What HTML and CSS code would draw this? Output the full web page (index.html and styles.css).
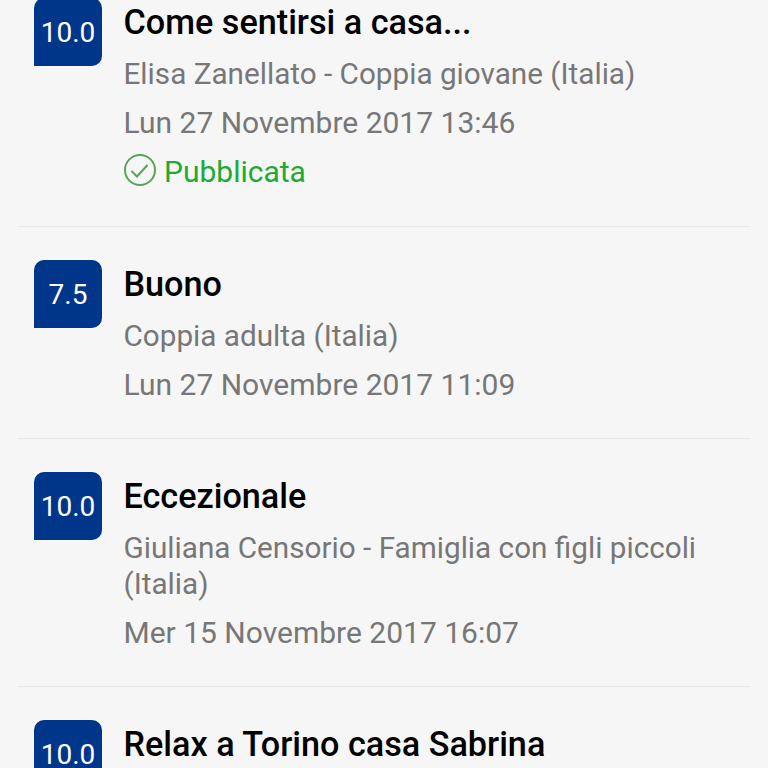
FILE: index.html
```html
<!DOCTYPE html>
<html lang="it">
	<head>
		<title>Recensioni</title>
		<meta charset="utf-8">
		<link rel="stylesheet" href="styles.css">
	</head>
	<body>
		<div class="list">

			<div class="review">
				<div class="score">10.0</div>
				<div class="body">
					<h3 class="title">Come sentirsi a casa...</h3>
					<p class="meta">Elisa Zanellato - Coppia giovane (Italia)</p>
					<p class="meta date">Lun 27 Novembre 2017 13:46</p>
					<p class="status">
						<svg class="status-icon" viewBox="0 0 32 32">
							<circle cx="16" cy="16" r="15" />
							<path d="M7.5 17l5.5 5.5l10.5-11.5" />
						</svg>
						Pubblicata
					</p>
				</div>
			</div>

			<div class="review">
				<div class="score">7.5</div>
				<div class="body">
					<h3 class="title">Buono</h3>
					<p class="meta">Coppia adulta (Italia)</p>
					<p class="meta date">Lun 27 Novembre 2017 11:09</p>
				</div>
			</div>

			<div class="review">
				<div class="score">10.0</div>
				<div class="body">
					<h3 class="title">Eccezionale</h3>
					<p class="meta">Giuliana Censorio - Famiglia con figli piccoli (Italia)</p>
					<p class="meta date">Mer 15 Novembre 2017 16:07</p>
				</div>
			</div>

			<div class="review">
				<div class="score">10.0</div>
				<div class="body">
					<h3 class="title">Relax a Torino casa Sabrina</h3>
				</div>
			</div>

		</div>
	</body>
</html>
```

FILE: styles.css
```css
/*
 * RESET
 */
* { margin: 0; padding: 0; box-sizing: border-box; }
html, body { height: 100%; overflow: hidden; }

/*
 * LAYOUT
 */
body { background: #f6f6f6; font-family: Roboto, sans-serif; }

.list { margin-top: -35px; padding: 0 18px; }

.review {
	display: flex;
	gap: 21.5px;
	padding: 33px 16px 35px;
	border-bottom: 1px solid #e9e9e9;
}
.review:last-child { border-bottom: none; }

.score {
	flex: none;
	display: flex; align-items: center; justify-content: center;
	width: 68px; height: 68px;
	padding-top: 1px;
	background: #00368a;
	border-radius: 10px 10px 10px 0;
	color: #fff;
	font-size: 28px;
}

.body { flex: 1; min-width: 0; }

.title {
	color: #000;
	font-size: 34.2px; font-weight: 500;
	line-height: 48px;
}

.meta {
	margin-top: 10px;
	color: #777;
	font-size: 29.7px;
	line-height: 36px;
}
.date { margin-top: 13px; font-size: 30px; }

.status {
	display: flex; align-items: center; gap: 8px;
	margin-top: 13px;
	margin-bottom: 1px;
	color: #20aa35;
	font-size: 30px;
	line-height: 36px;
}
.status-icon {
	width: 32px; height: 32px;
	margin-left: 0.5px; margin-bottom: 4px;
	fill: none; stroke: #55a555; stroke-width: 2;
}
```
